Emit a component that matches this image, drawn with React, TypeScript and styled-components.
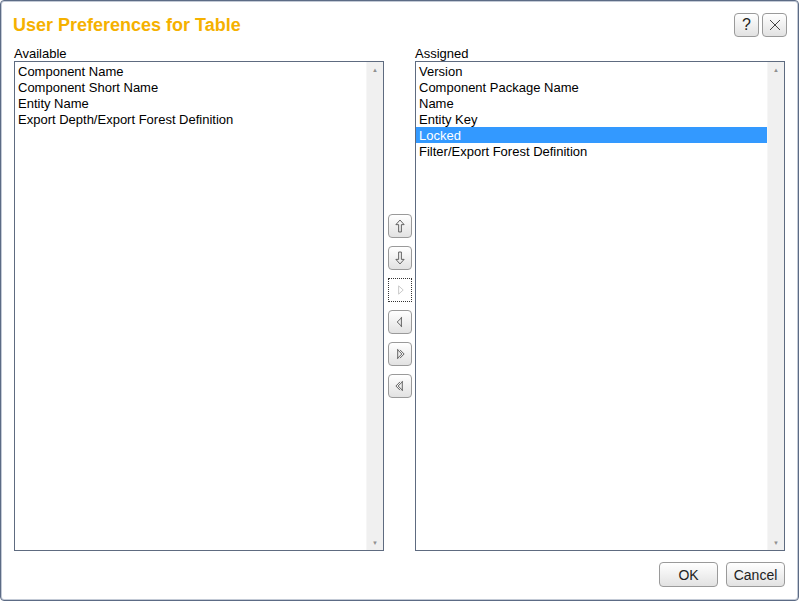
import React from "react";
import styled, { createGlobalStyle } from "styled-components";

const available = [
    "Component Name",
    "Component Short Name",
    "Entity Name",
    "Export Depth/Export Forest Definition",
];

const assigned = [
    "Version",
    "Component Package Name",
    "Name",
    "Entity Key",
    "Locked",
    "Filter/Export Forest Definition",
];

const ArrowIcon = ({ kind }: { kind: string }) => {
    const stroke = kind === "right" ? "#c4c4c4" : "#555";
    return (
        <svg width="24" height="24" viewBox="0 0 24 24" fill="none" stroke={stroke} strokeWidth="1">
            {kind === "up" && <path d="M12 5.5 L16.5 10.5 L13.5 10.5 L13.5 18.5 L10.5 18.5 L10.5 10.5 L7.5 10.5 Z" />}
            {kind === "down" && <path d="M12 18.5 L16.5 13.5 L13.5 13.5 L13.5 5.5 L10.5 5.5 L10.5 13.5 L7.5 13.5 Z" />}
            {kind === "right" && <path d="M10.5 7.5 L15.5 12 L10.5 16.5 Z" />}
            {kind === "left" && <path d="M13.5 6.5 L13.5 17.5 M13.5 7.5 L9 12 L13.5 16.5" />}
            {kind === "allRight" && (
                <path d="M9.5 6.5 L9.5 17.5 M9.5 7.5 L14 12 L9.5 16.5 M12 7.5 L16.5 12 L12 16.5" />
            )}
            {kind === "allLeft" && (
                <path d="M14.5 6.5 L14.5 17.5 M14.5 7.5 L10 12 L14.5 16.5 M12 7.5 L7.5 12 L12 16.5" />
            )}
        </svg>
    );
};

const ListBox = ({ items, selected }: { items: string[]; selected?: string }) => (
    <Box>
        <Items>
            {items.map((item) => (
                <Item key={item} $selected={item === selected}>
                    {item}
                </Item>
            ))}
        </Items>
        <ScrollTrack>
            <ScrollArrow>▲</ScrollArrow>
            <ScrollArrow>▼</ScrollArrow>
        </ScrollTrack>
    </Box>
);

const App = () => {
    return (
        <>
            <GlobalStyle />
            <Dialog>
                <Header>
                    <Title>User Preferences for Table</Title>
                    <HeaderButtons>
                        <IconButton>?</IconButton>
                        <IconButton>
                            <svg width="12" height="12" viewBox="0 0 12 12" stroke="#444" strokeWidth="1">
                                <path d="M1 1 L11 11 M11 1 L1 11" />
                            </svg>
                        </IconButton>
                    </HeaderButtons>
                </Header>

                <Body>
                    <Label>Available</Label>
                    <span />
                    <Label>Assigned</Label>
                    <ListBox items={available} />
                    <MoveColumn>
                        <MoveButton>
                            <ArrowIcon kind="up" />
                        </MoveButton>
                        <MoveButton>
                            <ArrowIcon kind="down" />
                        </MoveButton>
                        <MoveButton $focused>
                            <ArrowIcon kind="right" />
                        </MoveButton>
                        <MoveButton>
                            <ArrowIcon kind="left" />
                        </MoveButton>
                        <MoveButton>
                            <ArrowIcon kind="allRight" />
                        </MoveButton>
                        <MoveButton>
                            <ArrowIcon kind="allLeft" />
                        </MoveButton>
                    </MoveColumn>
                    <ListBox items={assigned} selected="Locked" />
                </Body>

                <Footer>
                    <TextButton>OK</TextButton>
                    <TextButton>Cancel</TextButton>
                </Footer>
            </Dialog>
        </>
    );
};

const GlobalStyle = createGlobalStyle`
    * {
        box-sizing: border-box;
    }
    body {
        margin: 0;
        background: #ffffff;
        font-family: "Liberation Sans", Arial, sans-serif;
    }
`;

const Dialog = styled.div`
    display: flex;
    flex-direction: column;
    width: 799px;
    height: 601px;
    padding: 12px 13px 12px 13px;
    border: 1px solid #5c6b85;
    border-radius: 4px;
    box-shadow: inset 0 0 0 1px #c3cad6;
    background: #ffffff;
`;

const Header = styled.div`
    display: flex;
    align-items: center;
    justify-content: space-between;
    height: 24px;
    margin-right: -2px;
`;

const Title = styled.h1`
    margin: 0 0 0 -1px;
    font-size: 18px;
    font-weight: bold;
    color: #f5b100;
`;

const HeaderButtons = styled.div`
    display: flex;
    gap: 3px;
`;

const buttonFace = `
    border: 1px solid #9a9a9a;
    border-radius: 4px;
    background: linear-gradient(#ffffff, #e2e2e2);
    color: #222;
    padding: 0;
    font-family: "Liberation Sans", Arial, sans-serif;
`;

const IconButton = styled.button`
    ${buttonFace}
    display: flex;
    align-items: center;
    justify-content: center;
    width: 25px;
    height: 24px;
    font-size: 16px;
`;

const Body = styled.div`
    display: grid;
    grid-template-columns: 370px 31px 370px;
    grid-template-rows: 15px 490px;
    margin-top: 9px;
`;

const Label = styled.div`
    font-size: 13px;
    line-height: 15px;
    color: #000;
`;

const Box = styled.div`
    display: flex;
    border: 1px solid #5e6b80;
    background: #ffffff;
`;

const Items = styled.ul`
    flex: 1;
    margin: 0;
    padding: 1px 0 0 0;
    list-style: none;
`;

const Item = styled.li<{ $selected?: boolean }>`
    height: 16px;
    padding: 1px 0 0 3px;
    font-size: 13px;
    line-height: 15px;
    color: ${({ $selected }) => ($selected ? "#ffffff" : "#000000")};
    background: ${({ $selected }) => ($selected ? "#3399ff" : "transparent")};
`;

const ScrollTrack = styled.div`
    display: flex;
    flex-direction: column;
    justify-content: space-between;
    align-items: center;
    width: 17px;
    padding: 3px 0 2px;
    background: #f0f0f0;
    border-left: 1px solid #f6f6f6;
`;

const ScrollArrow = styled.span`
    font-size: 6px;
    line-height: 10px;
    color: #909090;
`;

const MoveColumn = styled.div`
    display: flex;
    flex-direction: column;
    align-items: center;
    justify-content: center;
    gap: 8px;
`;

const MoveButton = styled.button<{ $focused?: boolean }>`
    ${buttonFace}
    display: flex;
    align-items: center;
    justify-content: center;
    width: 24px;
    height: 24px;
    ${({ $focused }) =>
        $focused &&
        `
        border: 1px dotted #333;
        border-radius: 0;
        background: #ffffff;
    `}
`;

const Footer = styled.div`
    display: flex;
    justify-content: flex-end;
    gap: 8px;
    margin-top: 11px;
`;

const TextButton = styled.button`
    ${buttonFace}
    width: 59px;
    height: 25px;
    font-size: 14px;
`;

export default App;
